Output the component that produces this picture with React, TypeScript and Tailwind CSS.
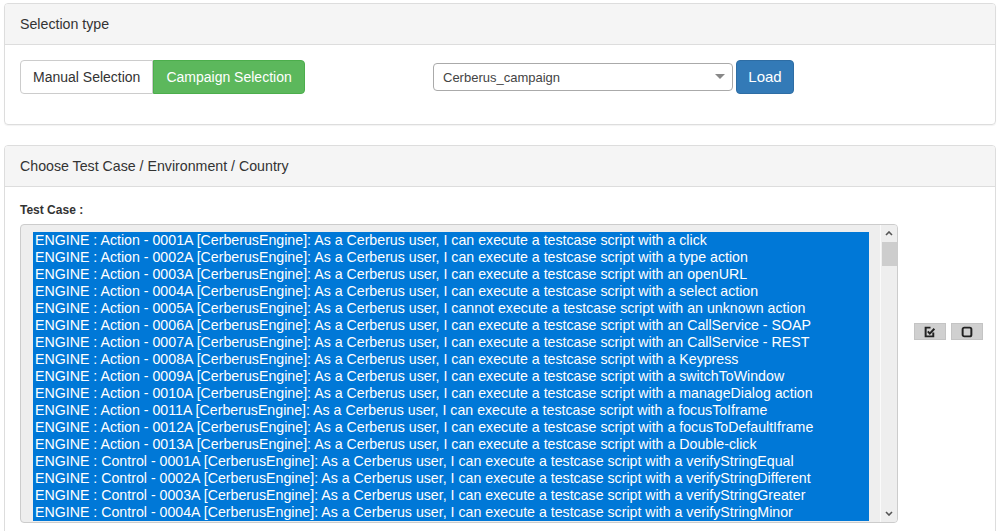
import React from "react";

const rows: string[] = [
  "ENGINE : Action - 0001A [CerberusEngine]: As a Cerberus user, I can execute a testcase script with a click",
  "ENGINE : Action - 0002A [CerberusEngine]: As a Cerberus user, I can execute a testcase script with a type action",
  "ENGINE : Action - 0003A [CerberusEngine]: As a Cerberus user, I can execute a testcase script with an openURL",
  "ENGINE : Action - 0004A [CerberusEngine]: As a Cerberus user, I can execute a testcase script with a select action",
  "ENGINE : Action - 0005A [CerberusEngine]: As a Cerberus user, I cannot execute a testcase script with an unknown action",
  "ENGINE : Action - 0006A [CerberusEngine]: As a Cerberus user, I can execute a testcase script with an CallService - SOAP",
  "ENGINE : Action - 0007A [CerberusEngine]: As a Cerberus user, I can execute a testcase script with an CallService - REST",
  "ENGINE : Action - 0008A [CerberusEngine]: As a Cerberus user, I can execute a testcase script with a Keypress",
  "ENGINE : Action - 0009A [CerberusEngine]: As a Cerberus user, I can execute a testcase script with a switchToWindow",
  "ENGINE : Action - 0010A [CerberusEngine]: As a Cerberus user, I can execute a testcase script with a manageDialog action",
  "ENGINE : Action - 0011A [CerberusEngine]: As a Cerberus user, I can execute a testcase script with a focusToIframe",
  "ENGINE : Action - 0012A [CerberusEngine]: As a Cerberus user, I can execute a testcase script with a focusToDefaultIframe",
  "ENGINE : Action - 0013A [CerberusEngine]: As a Cerberus user, I can execute a testcase script with a Double-click",
  "ENGINE : Control - 0001A [CerberusEngine]: As a Cerberus user, I can execute a testcase script with a verifyStringEqual",
  "ENGINE : Control - 0002A [CerberusEngine]: As a Cerberus user, I can execute a testcase script with a verifyStringDifferent",
  "ENGINE : Control - 0003A [CerberusEngine]: As a Cerberus user, I can execute a testcase script with a verifyStringGreater",
  "ENGINE : Control - 0004A [CerberusEngine]: As a Cerberus user, I can execute a testcase script with a verifyStringMinor",
];

export default function App() {
  return (
    <div
      className="w-[1000px] h-[531px] overflow-hidden bg-white px-[4px] pt-[3px] text-[#333]"
      style={{ fontFamily: '"Liberation Sans", Arial, sans-serif' }}
    >
      {/* Panel 1 */}
      <div className="border border-[#ddd] rounded-[4px] mb-[20px] shadow-[0_1px_1px_rgba(0,0,0,0.05)]">
        <div className="bg-[#f5f5f5] border-b border-[#ddd] rounded-t-[3px] px-[15px] py-[10px] text-[14.2px] leading-[20px]">
          Selection type
        </div>
        <div className="p-[15px]">
          <div className="flex items-center mb-[15px] h-[34px]">
            <div className="w-[413px] flex">
              <div className="h-[34px] px-[12px] flex items-center border border-[#ccc] rounded-l-[4px] bg-white text-[14px] text-[#333]">
                Manual Selection
              </div>
              <div className="h-[34px] px-[12px] flex items-center border border-[#4cae4c] rounded-r-[4px] bg-[#5cb85c] text-[14px] text-white">
                Campaign Selection
              </div>
            </div>
            <div className="w-[300px] h-[28px] border border-[#aaa] rounded-[4px] bg-white flex items-center justify-between pl-[9px] pr-[7px] text-[13px] text-[#444]">
              <span className="pt-[1px]">Cerberus_campaign</span>
              <svg width="10" height="6" viewBox="0 0 10 6">
                <path d="M0 0 L10 0 L5 5 Z" fill="#888" />
              </svg>
            </div>
            <div className="ml-[3px] h-[34px] w-[58px] flex items-center justify-center border border-[#2e6da4] rounded-[4px] bg-[#337ab7] text-[15px] text-white">
              Load
            </div>
          </div>
        </div>
      </div>

      {/* Panel 2 */}
      <div className="border border-[#ddd] rounded-[4px] h-[400px]">
        <div className="bg-[#f5f5f5] border-b border-[#ddd] rounded-t-[3px] px-[15px] py-[10px] text-[14.2px] leading-[20px]">
          Choose Test Case / Environment / Country
        </div>
        <div className="p-[15px]">
          <div className="text-[12px] font-bold leading-[17px] mb-[5px]">Test Case :</div>
          <div className="flex">
            <div className="w-[878px] shrink-0 h-[299px] border border-[#ccc] rounded-[4px] bg-[#eee] flex overflow-hidden">
              <div className="flex-1 pl-[12px] pr-[11px] pt-[7px] overflow-hidden">
                {rows.map((r) => (
                  <div
                    key={r}
                    className="h-[17px] leading-[17px] bg-[#0078d7] text-white text-[14.2px] pl-[2px] whitespace-nowrap overflow-hidden"
                  >
                    {r}
                  </div>
                ))}
              </div>
              <div className="w-[17px] h-full border-l border-[#fafafa] bg-[#eeeeee] flex flex-col items-center">
                <div className="h-[17px] w-full flex items-center justify-center">
                  <svg width="8" height="5" viewBox="0 0 8 5">
                    <path d="M1 4 L4 1 L7 4" stroke="#555" strokeWidth="1.6" fill="none" />
                  </svg>
                </div>
                <div className="w-[15px] h-[24px] bg-[#cdcdcd]" />
                <div className="flex-1" />
                <div className="h-[17px] w-full flex items-center justify-center">
                  <svg width="8" height="5" viewBox="0 0 8 5">
                    <path d="M1 1 L4 4 L7 1" stroke="#555" strokeWidth="1.6" fill="none" />
                  </svg>
                </div>
              </div>
            </div>
            <div className="shrink-0 pl-[16px] pt-[99px] flex gap-[5px] items-start">
              <div className="w-[32px] h-[17px] bg-[#d0d0d0] border border-[#c4c4c4] flex items-center justify-center">
                <svg width="12" height="12" viewBox="0 0 11 11">
                  <path d="M8.5 6 V9.5 H1.5 V1.5 H6" stroke="#222" strokeWidth="1.8" fill="none" />
                  <path d="M3.5 5 L5.3 7 L9.5 2.5" stroke="#222" strokeWidth="1.8" fill="none" />
                </svg>
              </div>
              <div className="w-[32px] h-[17px] bg-[#d0d0d0] border border-[#c4c4c4] flex items-center justify-center">
                <svg width="12" height="12" viewBox="0 0 11 11">
                  <rect x="1.5" y="1.5" width="8" height="8" rx="1.5" stroke="#222" strokeWidth="1.8" fill="none" />
                </svg>
              </div>
            </div>
          </div>
        </div>
      </div>
    </div>
  );
}
